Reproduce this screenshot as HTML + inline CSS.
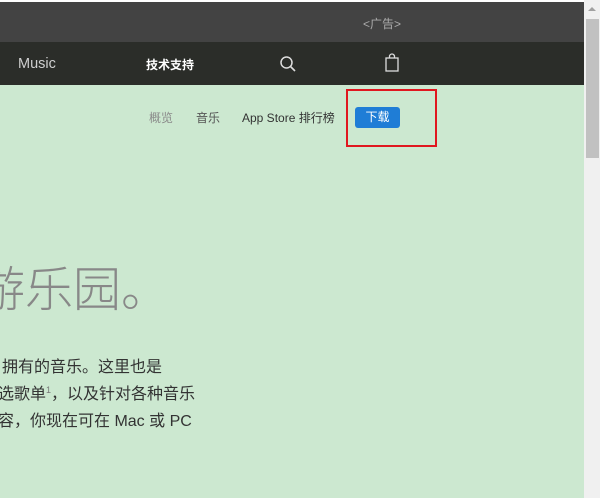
<!DOCTYPE html>
<html><head><meta charset="utf-8"><style>
*{margin:0;padding:0;box-sizing:border-box}
body{width:600px;height:498px;overflow:hidden;background:#fff;position:relative;font-family:"Liberation Sans","Noto Sans CJK SC",sans-serif}
.abs{position:absolute;white-space:nowrap}
#top{left:0;top:2px;width:584px;height:40px;background:#434343}
#nav{left:0;top:42px;width:584px;height:43px;background:#2b2d29}
#main{left:0;top:85px;width:584px;height:413px;background:#cce8d0}
#sb{left:584px;top:0;width:16px;height:498px;background:#f0f0f0}
#thumb{left:586px;top:19px;width:13px;height:139px;background:#c1c1c1}
</style></head><body>
<div class="abs" id="top"></div>
<div class="abs" id="nav"></div>
<div class="abs" id="main"></div>
<div class="abs" id="sb"></div>
<div class="abs" style="left:588px;top:7px;width:0;height:0;border-left:4px solid transparent;border-right:4px solid transparent;border-bottom:4px solid #a0a0a0"></div>
<div class="abs" id="thumb"></div>
<div class="abs" style="left:363px;top:15px;font-size:12px;color:#aaa">&lt;广告&gt;</div>
<div class="abs" style="left:18px;top:56px;font-size:14.5px;color:#cfcfcf">Music</div>
<div class="abs" style="left:146px;top:56px;font-size:12px;color:#fff;font-weight:bold">技术支持</div>
<svg class="abs" style="left:279px;top:55px" width="18" height="18" viewBox="0 0 18 18"><circle cx="7.5" cy="7.5" r="5.5" fill="none" stroke="#ddd" stroke-width="1.5"/><path d="M11.5 11.5L16 16" stroke="#ddd" stroke-width="1.6"/></svg>
<svg class="abs" style="left:384px;top:53px" width="16" height="20" viewBox="0 0 16 20"><rect x="2" y="5" width="12" height="13" fill="none" stroke="#ddd" stroke-width="1.3"/><path d="M5.5 5V3.5a2.5 2.5 0 0 1 5 0V5" fill="none" stroke="#ddd" stroke-width="1.3"/></svg>
<div class="abs" style="left:149px;top:109px;font-size:12px;color:#8a8a8a">概览</div>
<div class="abs" style="left:196px;top:109px;font-size:12px;color:#555">音乐</div>
<div class="abs" style="left:242px;top:109px;font-size:12px;color:#333">App Store 排行榜</div>
<div class="abs" style="left:355px;top:107px;width:45px;height:21px;background:#1f7dd6;border-radius:3px;color:#fff;font-size:12px;text-align:center;line-height:21px">下载</div>
<div class="abs" style="left:346px;top:89px;width:91px;height:58px;border:2px solid #e0171f"></div>
<div class="abs" style="left:-23px;top:261px;font-size:48px;color:#888;font-weight:300;line-height:60px">游乐园。</div>
<div class="abs" style="left:2px;top:354px;font-size:16px;color:#333;line-height:28px">拥有的音乐。这里也是</div>
<div class="abs" style="left:-2px;top:381px;font-size:16px;color:#333;line-height:28px">选歌单<span style="font-size:9px;color:#777;vertical-align:6px;line-height:0">1</span>，以及针对各种音乐</div>
<div class="abs" style="left:-2px;top:408px;font-size:16px;color:#333;line-height:28px">容，你现在可在 Mac 或 PC</div>
</body></html>
